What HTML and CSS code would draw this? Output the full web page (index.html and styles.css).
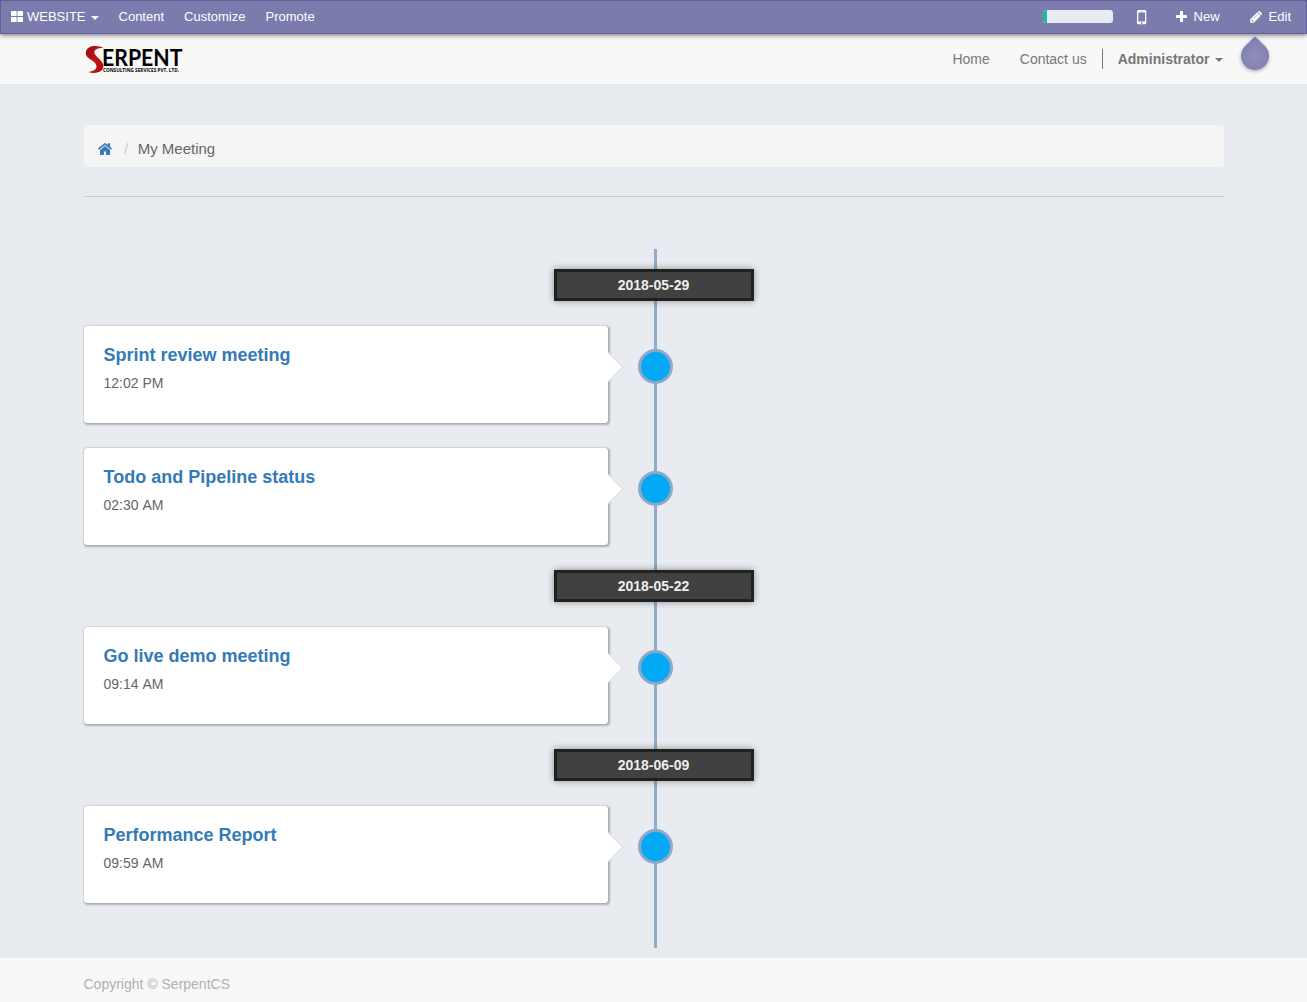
FILE: index.html
```html
<!DOCTYPE html>
<html lang="en">
<head>
<meta charset="utf-8">
<title>My Meeting</title>
<link rel="stylesheet" href="styles.css">
</head>
<body>
<nav class="topbar">
  <div class="topbar-menu">
    <a class="brand"><svg class="grid-icon" width="12" height="11" viewBox="0 0 12 11"><path fill="#fff" d="M.7 0h4.300q.6 0 .6.6v4q0 .5-.6.5H.6Q0 5.100 0 4.600V.6Q0 0 .7 0zM7 0h4.400q.6 0 .6.6v4q0 .5-.6.5H7q-.6 0-.6-.5V.6Q6.400 0 7 0zM.6 6h4.400q.6 0 .6.5v3.900q0 .6-.6.6H.6q-.6 0-.6-.6V6.500Q0 6 .6 6zM7 6h4.400q.6 0 .6.5v3.900q0 .6-.6.6H7q-.6 0-.6-.6V6.500Q6.400 6 7 6z"/></svg>WEBSITE<span class="caret"></span></a>
    <a>Content</a>
    <a>Customize</a>
    <a>Promote</a>
  </div>
  <div class="topbar-tools">
    <div class="progress"><div class="progress-fill"></div></div>
    <svg class="phone" width="10" height="15" viewBox="0 0 10 15"><path fill="#fff" fill-rule="evenodd" d="M1.500 0h6.300Q9.300 0 9.300 1.500v11.300q0 1.500-1.500 1.500H1.500Q0 14.300 0 12.800V1.500Q0 0 1.500 0zM1.300 2.500v9h6.700v-9zM3.500.9v.5h2.300V.9zM4.650 12.200a.8.8 0 1 0 .01 0z"/></svg>
    <a class="tool-new"><svg width="11" height="11" viewBox="0 0 11 11"><path fill="#fff" d="M4.600 0h1.800q.6 0 .6.600V4h3.300q.7 0 .7.600v1.800q0 .6-.7.600H7v3.300q0 .7-.6.700H4.600q-.6 0-.6-.7V7H.7Q0 7 0 6.400V4.600Q0 4 .7 4H4V.6Q4 0 4.600 0z"/></svg>New</a>
    <a class="tool-edit"><svg width="12" height="12" viewBox="0 0 12 12"><path fill="#fff" fill-rule="evenodd" d="M7.200 1.300l3.500 3.500-6.900 6.900H.2V8.200zM1.500 9.300v.7h.8v.8h.6l.6-.6-1.400-1.500zM7.300 3.300L3.400 7.200l.3.300 3.900-3.900z"/><path fill="#fff" d="M7.800.8L8.600.2q.6-.5 1.200 0l2 2q.5.600 0 1.200l-.7.800z"/></svg>Edit</a>
  </div>
  <div class="drop"></div>
</nav>
<header class="header">
  <div class="container header-row">
    <svg class="logo" width="101" height="30" viewBox="0 0 101 30" role="img" aria-label="Serpent">
      <defs><linearGradient id="snake" x1="0" y1="0" x2="1" y2="1"><stop offset="0" stop-color="#8d0b10"/><stop offset=".5" stop-color="#c51318"/><stop offset="1" stop-color="#a80e12"/></linearGradient></defs>
      <path fill="url(#snake)" d="M19.500 4C16 1.500 9 1.200 5 3.400C1 5.700 .7 11 4.500 14C8 16.700 12.500 18.700 12.500 22.500C12.500 25.700 9 27.400 4.200 28C10 30 18.800 29 19.400 22.500C19.700 16.500 11.400 13.300 10.400 9C9.700 5.500 14 3.800 19.500 4z"/>
      <text class="logo-name" x="18" y="22" textLength="80.500" lengthAdjust="spacingAndGlyphs">ERPENT</text>
      <text class="logo-sub" x="19" y="28" textLength="76" lengthAdjust="spacingAndGlyphs">CONSULTING SERVICES PVT. LTD.</text>
    </svg>
    <nav class="links">
      <a>Home</a>
      <a>Contact us</a>
      <a class="user">Administrator<span class="caret"></span></a>
    </nav>
  </div>
</header>
<main class="container main">
  <div class="breadcrumb">
    <svg class="home" width="14" height="12" viewBox="0 0 14 12"><path fill="#337ab7" d="M7 2.900l5 4.100v4.300q0 .6-.6.600H8.100V8.400H5.900v3.500H2.600q-.6 0-.6-.6V7z"/><path fill="#337ab7" d="M6.100.4Q7-.3 7.900.4L9.800 2V.6q0-.3.300-.3h1.700q.3 0 .3.300v3.300l1.700 1.400q.3.300 0 .6l-.5.600q-.2.200-.5 0L7 1.900 1.200 6.500q-.3.200-.5 0L.2 5.900q-.3-.3 0-.6z"/></svg>
    <span class="slash">/</span><span>My Meeting</span>
  </div>
  <hr class="rule">
  <section class="timeline">
    <div class="date">2018-05-29</div>
    <div class="entry"><article class="card"><h4>Sprint review meeting</h4><p>12:02 PM</p></article><span class="dot"></span></div>
    <div class="entry"><article class="card"><h4>Todo and Pipeline status</h4><p>02:30 AM</p></article><span class="dot"></span></div>
    <div class="date">2018-05-22</div>
    <div class="entry"><article class="card"><h4>Go live demo meeting</h4><p>09:14 AM</p></article><span class="dot"></span></div>
    <div class="date">2018-06-09</div>
    <div class="entry"><article class="card"><h4>Performance Report</h4><p>09:59 AM</p></article><span class="dot"></span></div>
  </section>
</main>
<footer class="footer"><div class="container">Copyright © SerpentCS</div></footer>
</body>
</html>
```
FILE: styles.css
```css
* { box-sizing: border-box; }
body {
  margin: 0;
  height: 1002px;
  display: flex;
  flex-direction: column;
  background: #e8ebef;
  color: #666;
  font: 14px/20px "Liberation Sans", Arial, sans-serif;
}
.container { width: 1140px; margin: 0 auto; }
.caret {
  display: inline-block;
  border: 4px solid transparent;
  border-top-color: currentColor;
  border-bottom: 0;
}

.topbar {
  position: relative;
  z-index: 2;
  flex: none;
  display: flex;
  justify-content: space-between;
  height: 34px;
  padding: 0 15px 0 10px;
  border: 1px solid #5f5e97;
  background: #7c7bad;
  box-shadow: 0 1px 5px rgba(0, 0, 0, .55);
  color: #fff;
  font-size: 13px;
  line-height: 31px;
}
.topbar-menu { display: flex; gap: 20px; height: 31px; }
.brand { display: flex; align-items: center; }
.grid-icon { margin: 0 4px 1px 0; }
.brand .caret { margin: 3px 0 0 5px; }
.topbar-tools { display: flex; align-items: center; height: 31px; }
.progress { width: 70px; height: 13px; border-radius: 3px; background: #e8ebef; overflow: hidden; }
.progress-fill { width: 4px; height: 13px; background: #21b799; }
.phone { margin: 1px 29px 0 24px; }
.tool-new, .tool-edit { display: flex; align-items: center; gap: 7px; }
.tool-new { margin-right: 30px; }
.drop {
  position: absolute;
  left: 1240px;
  top: 41px;
  width: 28px;
  height: 28px;
  border-radius: 0 50% 50% 50%;
  transform: rotate(45deg);
  background: radial-gradient(#8f8eba, #7c7bad);
  box-shadow: 1px 1px 4px rgba(0, 0, 0, .3);
}

.header { flex: none; height: 51px; background: #f8f8f8; border-bottom: 1px solid #e5e6e8; }
.header-row { display: flex; justify-content: space-between; align-items: center; height: 50px; }
.logo { margin: 0 0 0 .5px; overflow: visible; }
.logo-name { font: 700 23px Lato, sans-serif; fill: #000; }
.logo-sub { font: 700 6px "Open Sans", sans-serif; fill: #000; }
.links { display: flex; gap: 15px; color: #777; }
.links a + a { padding-left: 15px; }
.links .user { display: flex; align-items: center; border-left: 1px solid #777; font-weight: 700; }
.user .caret { margin: 1px 1px 0 5px; }

.main { flex: 1; }
.breadcrumb {
  display: flex;
  align-items: center;
  height: 42px;
  margin-top: 40px;
  padding: 6px 15px 0;
  border-radius: 4px;
  background: #f5f5f5;
  font-size: 15px;
}
.home { margin-left: -.5px; }
.slash { margin: 0 9.500px 0 12px; color: #ccc; }
.rule { margin: 29px 0 52px; border: 0; border-top: 1px solid #c7cbcf; }

.timeline {
  display: flex;
  flex-direction: column;
  gap: 25px;
  height: 699px;
  padding-top: 20px;
  background: linear-gradient(#8facc9, #8facc9) 570.5px 0 / 3px 100% no-repeat;
}
.date {
  align-self: center;
  width: 200px;
  height: 32px;
  border: 3px solid #212121;
  background: #414141;
  box-shadow: 0 0 7px rgba(0, 0, 0, .4);
  color: #eee;
  font-weight: 700;
  line-height: 27px;
  text-align: center;
}
.entry { display: flex; align-items: center; height: 97px; }
.card {
  position: relative;
  width: 524.500px;
  height: 97px;
  padding: 20px;
  border-radius: 3px;
  background: #fff;
  box-shadow: 0 0 1px rgba(0, 0, 0, .3), 1px 1px 2px 1px rgba(0, 0, 0, .25);
}
.card::after {
  content: "";
  position: absolute;
  left: 513px;
  top: 30px;
  width: 21px;
  height: 21px;
  background: #fff;
  border: solid #d3d6d9;
  border-width: 1px 1px 0 0;
  transform: rotate(45deg);
  clip-path: polygon(0 0, 100% 0, 100% 100%, 90% 100%, 0 10%);
}
.card h4 { margin: 0; color: #337ab7; font-size: 18px; line-height: 19px; }
.card p { margin: 8px 0 0; font-kerning: none; }
.dot {
  width: 35px;
  height: 35px;
  margin: -16px 0 0 30px;
  border: 3px solid #8ca9c9;
  border-radius: 50%;
  background: #03a9f4;
}

.footer { flex: none; height: 44px; padding-top: 16px; background: #f8f8f8; color: #b0b0b0; }
```
